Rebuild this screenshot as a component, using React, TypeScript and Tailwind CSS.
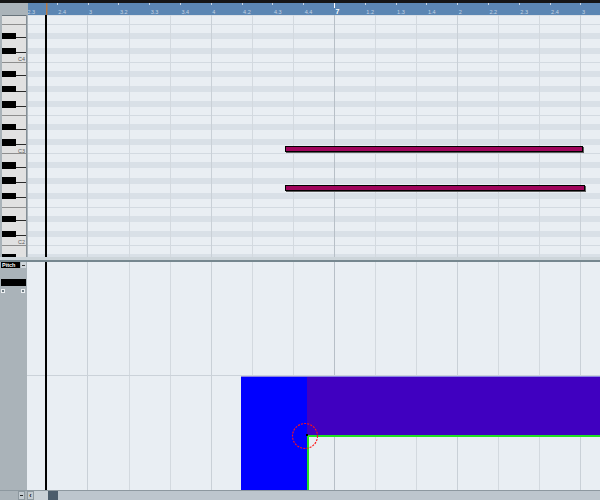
import React from "react";

const ROW = 7.625;
const C4TOP = 54.8;
const rowTop = (p: number) => C4TOP + (60 - p) * ROW;
const isBlack = (p: number) => [1, 3, 6, 8, 10].includes(((p % 12) + 12) % 12);
const PITCHES = Array.from({ length: 38 }, (_, i) => 68 - i);
const VLINES = Array.from({ length: 14 }, (_, i) => 46.4 + 41.08 * i);
const RULER = [
  "2.3", "2.4", "3", "3.2", "3.3", "3.4", "4", "4.2", "4.3", "4.4",
  "7", "1.2", "1.3", "1.4", "2", "2.2", "2.3", "2.4", "3",
];

function vColor(i: number) {
  if (i === 7) return "#b7bfc7";
  if (i === 1 || i === 4 || i === 10 || i === 13) return "#c9d0d7";
  return "#d3d9df";
}

function Ruler() {
  return (
    <div className="flex-1 bg-[#5b86b3]">
      <svg width={572} height={12} viewBox="28 3 572 12" className="block">
        {RULER.map((label, i) => {
          const k = i - 10;
          const x = 334 + 30.8 * k;
          const bar = k === 0;
          return (
            <g key={i}>
              <rect x={Math.round(x)} y={3} width={1} height={bar ? 5 : 2} fill={bar ? "#ffffff" : "#c9d8e8"} />
              <text
                x={x + 1.5}
                y={bar ? 14 : 13.5}
                fontSize={bar ? 7 : 5.5}
                fontWeight={bar ? 700 : 400}
                fill={bar ? "#ffffff" : "#c6d4e4"}
              >
                {label}
              </text>
            </g>
          );
        })}
        <rect x={46} y={3} width={1.5} height={12} fill="#b57a46" />
      </svg>
    </div>
  );
}

function Keyboard() {
  return (
    <div className="w-[28px] shrink-0">
      <svg width={28} height={242} viewBox="0 15 28 242" className="block" shapeRendering="crispEdges">
        <rect x={0} y={15} width={28} height={242} fill="#aab3b9" />
        <rect x={2} y={15} width={24} height={242} fill="#e1e1e1" />
        {PITCHES.map((p) => {
          const t = rowTop(p);
          const m = ((p % 12) + 12) % 12;
          return (
            <g key={p}>
              {(m === 0 || m === 5) && (
                <rect x={2} y={t + ROW - 0.5} width={24} height={1} fill="#8e8e8e" />
              )}
              {isBlack(p) && (
                <>
                  <rect x={2} y={t + 0.6} width={14} height={6.4} fill="#000000" />
                  <rect x={16} y={t + 5.2} width={10} height={1} fill="#2a2a2a" />
                </>
              )}
              {m === 0 && (
                <text
                  x={25}
                  y={t + 6.2}
                  fontSize={5.5}
                  textAnchor="end"
                  fill="#5a5a5a"
                  shapeRendering="auto"
                >
                  {"C" + (p / 12 - 1)}
                </text>
              )}
            </g>
          );
        })}
        <rect x={2} y={15} width={24} height={1} fill="#68737b" />
        <rect x={26} y={15} width={1} height={242} fill="#848e96" />
      </svg>
    </div>
  );
}

function NoteGrid() {
  return (
    <div className="relative flex-1 overflow-hidden">
      <svg width={572} height={242} viewBox="28 15 572 242" className="block" shapeRendering="crispEdges">
        <rect x={28} y={15} width={572} height={242} fill="#e9eef3" />
        {PITCHES.map((p) => {
          const t = rowTop(p);
          const m = ((p % 12) + 12) % 12;
          return (
            <g key={p}>
              {isBlack(p) && <rect x={28} y={t + 0.8} width={572} height={6} fill="#d9e0e7" />}
              {(m === 0 || m === 5) && <rect x={28} y={t + ROW - 0.5} width={572} height={1} fill="#d3dae1" />}
            </g>
          );
        })}
        {VLINES.map((x, i) => (
          <rect key={i} x={Math.round(x)} y={15} width={1} height={242} fill={vColor(i)} />
        ))}
        <rect x={45} y={15} width={2} height={242} fill="#000000" />
      </svg>
      <div className="absolute left-[257px] top-[131px] w-[298px] h-[6px] bg-[#a0055c] border border-black shadow-[1px_1px_0_#5a5a5a]" />
      <div className="absolute left-[257px] top-[170px] w-[300px] h-[6px] bg-[#a0055c] border border-black shadow-[1px_1px_0_#5a5a5a]" />
    </div>
  );
}

function LaneControls() {
  return (
    <div className="w-[27px] shrink-0 flex flex-col">
      <div className="flex h-[6px] ml-[1px]">
        <div className="w-[19px] bg-black text-white text-[5.5px] leading-[6px] font-bold pl-[1px] overflow-hidden">
          Pitch
        </div>
        <div className="w-[5px] ml-[1px] bg-[#cfd6db] flex items-center justify-center">
          <div className="w-[3px] h-[1px] bg-[#333]" />
        </div>
      </div>
      <div className="mt-[11px] ml-[1px] w-[25px] h-[7px] bg-black" />
      <div className="mt-[3px] flex justify-between px-[1px] w-[26px]">
        <div className="w-[4px] h-[4px] border border-[#eef1f3] bg-[#6f7d85]" />
        <div className="w-[4px] h-[4px] border border-[#eef1f3] bg-[#6f7d85]" />
      </div>
    </div>
  );
}

function Lane() {
  return (
    <div className="flex-1">
      <svg width={573} height={228} viewBox="27 262 573 228" className="block">
        <g shapeRendering="crispEdges">
          <rect x={27} y={262} width={573} height={228} fill="#e9eef3" />
          {VLINES.map((x, i) => (
            <rect key={i} x={Math.round(x)} y={262} width={1} height={228} fill={vColor(i)} />
          ))}
          <rect x={27} y={375} width={573} height={1} fill="#cbd2d9" />
          <rect x={45} y={262} width={2} height={228} fill="#000000" />
          <rect x={241} y={376} width={66} height={114} fill="#0000ff" />
          <rect x={307} y={376} width={293} height={59} fill="#4000c0" />
          <rect x={241} y={376} width={359} height={1} fill="#8a84e4" />
          <rect x={307} y={435} width={293} height={1.5} fill="#22e022" />
          <rect x={307} y={435} width={1.5} height={55} fill="#22e022" />
          <rect x={306} y={434} width={2} height={2} fill="#000000" />
        </g>
        <circle cx={305} cy={436} r={12.5} fill="none" stroke="#ff1414" strokeWidth={1.1} strokeDasharray="2 1.2" />
      </svg>
    </div>
  );
}

function Scrollbar() {
  return (
    <div className="h-[10px] flex bg-[#aab3b9] border-t border-[#8d989f]">
      <div className="w-[18px]" />
      <div className="w-[7px] bg-[#c2cad0] border border-[#8d989f] flex items-center justify-center">
        <div className="w-[3px] h-[1px] bg-[#222]" />
      </div>
      <div className="w-[2px]" />
      <div className="w-[7px] bg-[#c2cad0] border border-[#8d989f] text-[7px] leading-[7px] font-bold text-[#111] text-center">
        ‹
      </div>
      <div className="flex-1 flex bg-[#bdc6cd]">
        <div className="w-[14px] bg-[#c9d1d7]" />
        <div className="w-[10px] bg-[#4b5c6b]" />
      </div>
    </div>
  );
}

export default function App() {
  return (
    <div className="w-[600px] h-[500px] overflow-hidden bg-[#aab3b9] flex flex-col font-['Liberation_Sans',Arial,sans-serif] select-none">
      <div className="h-[3px] bg-[#151515] shrink-0" />
      <div className="h-[12px] flex shrink-0">
        <div className="w-[28px] bg-[#aab3b9]" />
        <Ruler />
      </div>
      <div className="h-[242px] flex shrink-0">
        <Keyboard />
        <NoteGrid />
      </div>
      <div className="h-[5px] shrink-0 flex flex-col">
        <div className="h-[3px] bg-[#cdd5da]" />
        <div className="h-[2px] bg-[#76878f]" />
      </div>
      <div className="h-[228px] flex shrink-0">
        <LaneControls />
        <Lane />
      </div>
      <Scrollbar />
    </div>
  );
}
